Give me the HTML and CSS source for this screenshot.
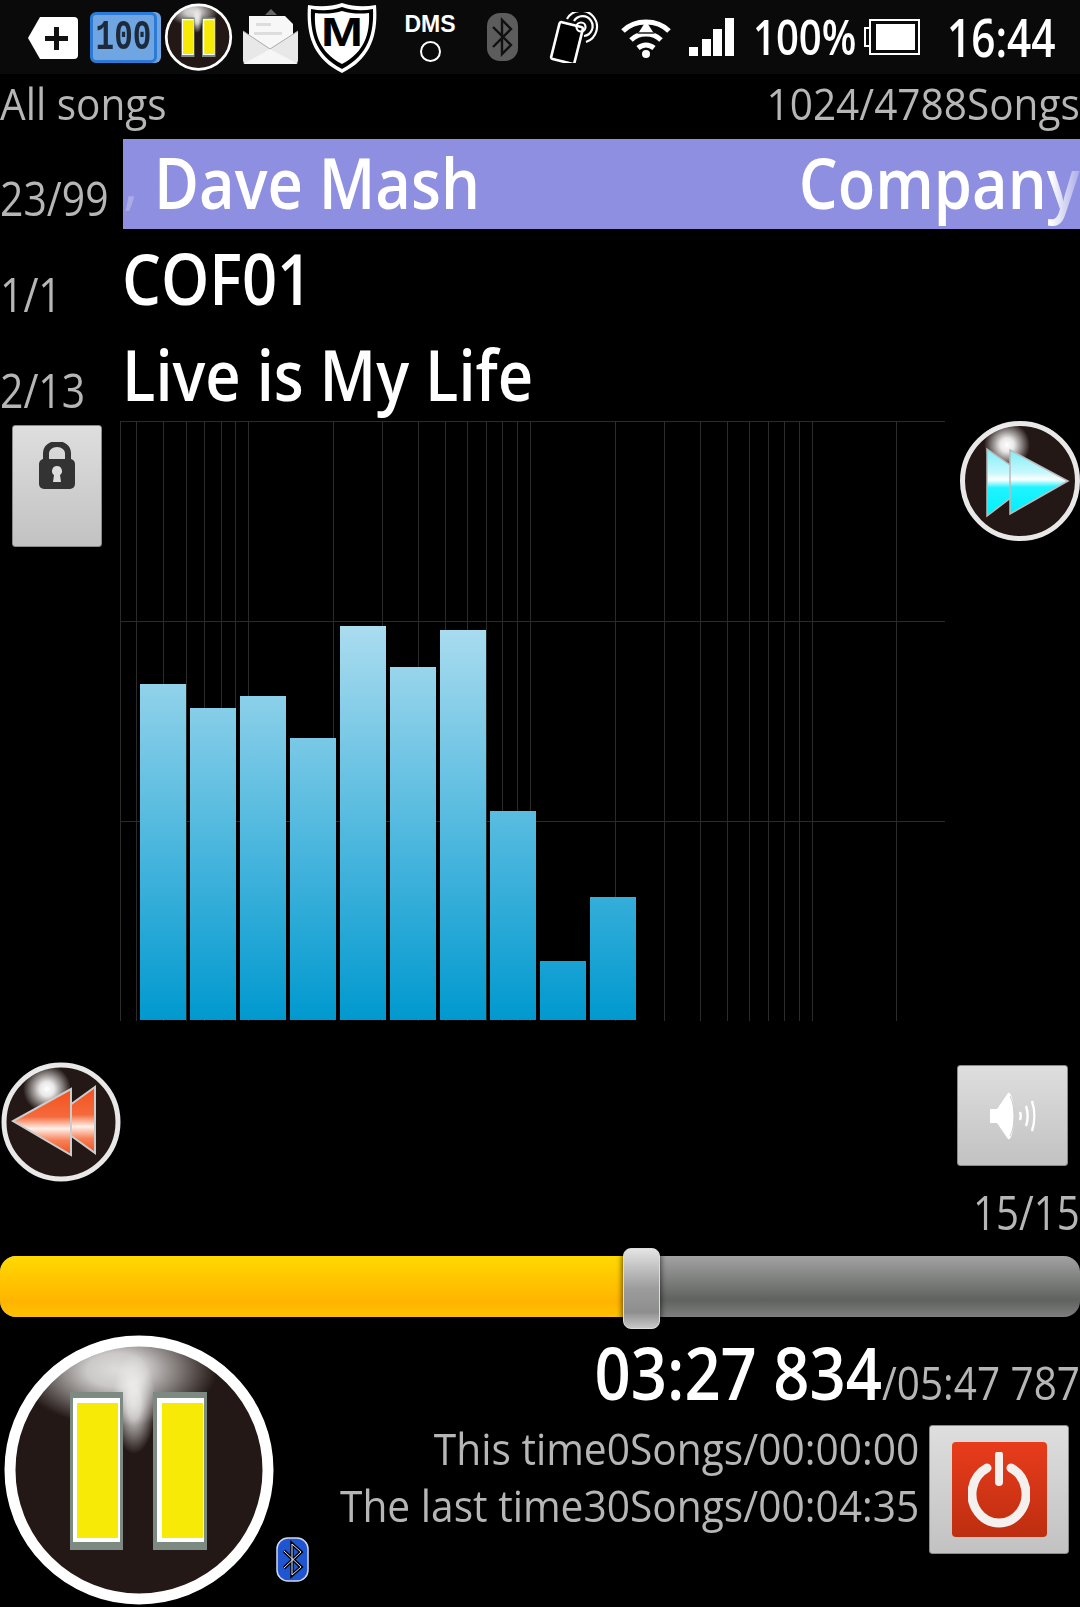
FILE: index.html
```html
<!DOCTYPE html>
<html lang="en">
<head>
<meta charset="utf-8">
<title>Player</title>
<link rel="stylesheet" href="styles.css">
</head>
<body>
<div class="screen">
  <header class="status">
    <svg class="ic-tag" viewBox="0 0 50 42"><path d="M12 0H46a4 4 0 0 1 4 4V38a4 4 0 0 1-4 4H12L0 21Z" fill="#fff"/><path d="M26 10h5v9h9v5h-9v9h-5v-9h-9v-5h9Z" fill="#111"/></svg>
    <div class="ic-batt"><span class="lcd">100</span></div>
    <svg class="ic-pause-s" viewBox="0 0 270 272"><use href="#pauseBtn"/></svg>
    <svg class="ic-mail" viewBox="0 0 55 55"><path d="M28 0 22 6h12Z" fill="#666"/><path d="M6 7h36l8 8V33L28 47 6 33Z" fill="#f7f7f7"/><path d="M13 14h15v3H13ZM11 23h28v3H11Z" fill="#ddd"/><path d="M0 22 27 40 55 22V51a4 4 0 0 1-4 4H4a4 4 0 0 1-4-4Z" fill="#e8e8e8"/><path d="M0 22 27 40 55 22" fill="none" stroke="#aaa" stroke-width="1"/><path d="M0 55 27 40 55 55Z" fill="#f6f6f6"/></svg>
    <svg class="ic-shield" viewBox="0 0 70 71"><path d="M35 1C47 5 58 5 69 3 71 30 66 56 35 71 4 56-1 30 1 3 12 5 23 5 35 1Z" fill="#fff"/><path d="M35 5C46 9 56 9 66 7 67 30 62 53 35 67 8 53 3 30 4 7 14 9 24 9 35 5Z" fill="#000"/><path d="M35 9C45 12 54 12 62 11 63 31 58 50 35 62 12 50 7 31 8 11 16 12 25 12 35 9Z" fill="#fff"/><text class="shield-m" x="14" y="44" textLength="42" lengthAdjust="spacingAndGlyphs">M</text></svg>
    <div class="dms"><span class="dms-text">DMS</span><span class="dms-dot"></span></div>
    <svg class="ic-bt" viewBox="0 0 31 48"><rect width="31" height="48" rx="13" fill="#5c5c5c"/><path d="M6 14 24 32 15 41V7l9 9L6 34" fill="none" stroke="#111" stroke-width="2.4"/></svg>
    <svg class="ic-nfc" viewBox="0 0 50 51"><rect x="6" y="12" width="24" height="38" rx="2" transform="rotate(14 18 31)" fill="#000" stroke="#fff" stroke-width="2.6"/><g fill="none" stroke="#fff" stroke-width="2.2"><path d="M18 7A16 16 0 1 1 37 30"/><path d="M25 9A10 10 0 1 1 35 24"/><circle cx="32" cy="15" r="4.5"/></g></svg>
    <svg class="ic-wifi" viewBox="0 0 50 41"><g fill="none" stroke="#fff" stroke-width="5"><path d="M2 14C14 2 36 2 48 14"/><path d="M10 23C18 15 32 15 40 23"/><path d="M17 31C22 27 28 27 33 31"/></g><circle cx="25" cy="37" r="4" fill="#fff"/><path d="M25 4 32 15H18Z" fill="#fff"/><path d="M18 15H32L34 17H16Z" fill="#555"/></svg>
    <svg class="ic-signal" viewBox="0 0 45 38"><path d="M0 29h9v9H0ZM13 21h9v17h-9ZM24 11h9v27h-9ZM36 0h9v38h-9Z" fill="#fff"/></svg>
    <span class="pct">100%</span>
    <div class="ic-power"><span class="batt-nub"></span><span class="batt-body"><span class="batt-fill"></span></span></div>
    <span class="clock">16:44</span>
  </header>

  <div class="info">
    <span class="muted">All songs</span>
    <span class="muted to-right">1024/4788Songs</span>
  </div>

  <section class="tracks">
    <div class="track">
      <span class="count">23/99</span>
      <div class="marquee">
        <span class="comma">,</span>
        <span class="title artist">Dave Mash</span>
        <span class="title company">Company</span>
      </div>
    </div>
    <div class="track">
      <span class="count">1/1</span>
      <span class="title">COF01</span>
    </div>
    <div class="track">
      <span class="count">2/13</span>
      <span class="title">Live is My Life</span>
    </div>
  </section>

  <section class="main">
    <div class="side">
      <button class="key lock" type="button">
        <svg class="lock-ic" viewBox="0 0 36 47"><path d="M7 20V11a11 9 0 0 1 22 0v9" fill="none" stroke="#333" stroke-width="6"/><rect y="17" width="36" height="30" rx="5" fill="#333"/><path d="M18 24a5 5 0 0 1 3 9l1 7h-8l1-7a5 5 0 0 1 3-9Z" fill="#ddd"/></svg>
      </button>
    </div>
    <div class="chart">
      <svg class="grid" viewBox="0 0 825 600">
        <path class="grid-lines" d="M0 .5H825M0 200.5H825M0 400.5H825M.5 0V600M16.5 0V600M43.5 0V600M66.5 0V600M84.5 0V600M101.5 0V600M115.5 0V600M128.5 0V600M213.5 0V600M262.5 0V600M298.5 0V600M325.5 0V600M347.5 0V600M366.5 0V600M382.5 0V600M397.5 0V600M410.5 0V600M495.5 0V600M544.5 0V600M580.5 0V600M607.5 0V600M629.5 0V600M648.5 0V600M664.5 0V600M679.5 0V600M692.5 0V600M776.5 0V600"/>
      </svg>
      <div class="bars">
        <div class="bar" style="height:336px"></div>
        <div class="bar" style="height:312px"></div>
        <div class="bar" style="height:324px"></div>
        <div class="bar" style="height:282px"></div>
        <div class="bar" style="height:394px"></div>
        <div class="bar" style="height:353px"></div>
        <div class="bar" style="height:390px"></div>
        <div class="bar" style="height:209px"></div>
        <div class="bar" style="height:59px"></div>
        <div class="bar" style="height:123px"></div>
      </div>
    </div>
    <svg class="round-btn" viewBox="0 0 120 120">
      <defs>
        <radialGradient id="glare"><stop offset="0" stop-color="#fff"/><stop offset=".3" stop-color="#fff" stop-opacity=".9"/><stop offset="1" stop-color="#fff" stop-opacity="0"/></radialGradient>
        <linearGradient id="cyan" x1="0" y1="0" x2="0" y2="1"><stop offset="0" stop-color="#7eeef8"/><stop offset=".36" stop-color="#c8f8fc"/><stop offset=".46" stop-color="#fff"/><stop offset=".58" stop-color="#20f4ff"/><stop offset="1" stop-color="#00f0ff"/></linearGradient>
        <linearGradient id="orange" x1="0" y1="0" x2="0" y2="1"><stop offset="0" stop-color="#f4501c"/><stop offset=".42" stop-color="#f46a3c"/><stop offset=".6" stop-color="#fff0e8"/><stop offset=".78" stop-color="#f88058"/><stop offset="1" stop-color="#f4501c"/></linearGradient>
      </defs>
      <circle cx="60" cy="60" r="57.5" fill="#231815" stroke="#e8e8e8" stroke-width="5"/>
      <circle cx="47" cy="24" r="23" fill="url(#glare)"/>
      <path d="M27 28 73 60 27 95Z" fill="url(#cyan)" stroke="#bbb" stroke-width="1.5"/>
      <path d="M50 29 108 60 50 93Z" fill="url(#cyan)" stroke="#bbb" stroke-width="1.5"/>
    </svg>
  </section>

  <section class="transport">
    <svg class="round-btn" viewBox="0 0 122 122">
      <circle cx="61" cy="61" r="57" fill="#231815" stroke="#e8e8e8" stroke-width="5"/>
      <circle cx="47" cy="28" r="24" fill="url(#glare)"/>
      <path d="M95 26V92L70 74V44Z" fill="url(#orange)" stroke="#ccc" stroke-width="2"/>
      <path d="M71 28V94L13 60Z" fill="url(#orange)" stroke="#ccc" stroke-width="2"/>
    </svg>
    <div class="vol">
      <button class="key vol-key" type="button">
        <svg class="vol-ic" viewBox="0 0 46 48"><path d="M0 17h7L18 1c3-2 6 8 6 23s-3 25-6 23L7 31H0Z" fill="#fff"/><g fill="none" stroke="#fff"><path d="M20 4c3 5 4 14 4 20s-1 15-4 20" stroke="#ccc" stroke-width="1"/><path d="M30 20c1 3 1 6 0 8" stroke-width="2.4"/><path d="M36 14c2 6 2 14 0 20" stroke-width="2.4"/><path d="M42 9c3 9 3 21 0 30" stroke-width="2.4"/></g></svg>
      </button>
      <span class="vol-level">15/15</span>
    </div>
  </section>

  <section class="seek">
    <div class="seek-track"><div class="seek-fill" style="width:625px"></div></div>
    <div class="seek-knob"></div>
  </section>

  <section class="bottom">
    <svg class="pause-big" viewBox="0 0 270 272">
      <defs>
        <clipPath id="pauseClip"><circle cx="135" cy="136" r="129"/></clipPath>
        <g id="pauseBtn">
          <circle cx="135" cy="136" r="129" fill="#231815"/>
          <g clip-path="url(#pauseClip)">
            <ellipse cx="113" cy="36" rx="100" ry="56" fill="url(#glare)" opacity=".85"/>
            <ellipse cx="130" cy="70" rx="22" ry="50" fill="url(#glare)" opacity=".8"/>
          </g>
          <circle cx="135" cy="136" r="129" fill="none" stroke="#fff" stroke-width="11"/>
          <rect x="66" y="58" width="53" height="158" fill="#7c8a82"/>
          <rect x="149" y="58" width="54" height="158" fill="#7c8a82"/>
          <rect x="69" y="64" width="47" height="144" fill="#fff"/>
          <rect x="153" y="64" width="47" height="144" fill="#fff"/>
          <rect x="73" y="69" width="41" height="135" fill="#f7ea06"/>
          <rect x="158" y="69" width="41" height="135" fill="#f7ea06"/>
        </g>
      </defs>
      <use href="#pauseBtn"/>
    </svg>
    <svg class="bt-badge" viewBox="0 0 33 45"><rect x="1" y="1" width="31" height="43" rx="11" fill="#1f55d0" stroke="#cfd8ee" stroke-width="1.5"/><path d="M8 14 25 30 16 38V7l9 8L8 31" fill="none" stroke="#000" stroke-width="3.5"/><path d="M8 14 25 30 16 38V7l9 8L8 31" fill="none" stroke="#dfe8ff" stroke-width="1"/></svg>
    <div class="readout">
      <div class="time"><span class="elapsed">03:27 834</span><span class="total">/05:47 787</span></div>
      <div class="stats">
        <div class="stat-lines">
          <div class="muted to-right stat">This time0Songs/00:00:00</div>
          <div class="muted to-right stat">The last time30Songs/00:04:35</div>
        </div>
        <button class="key power" type="button">
          <span class="power-face">
            <svg class="power-ic" viewBox="0 0 62 76"><path d="M19 16a27 29 0 1 0 24 0" fill="none" stroke="#f4f0ee" stroke-width="9" stroke-linecap="round"/><path d="M31 3V30" stroke="#f4f0ee" stroke-width="8" stroke-linecap="round"/></svg>
          </span>
        </button>
      </div>
    </div>
  </section>
</div>
</body>
</html>
```

FILE: styles.css
```css
* { box-sizing: border-box; }
html, body { margin: 0; padding: 0; background: #000; }
.screen {
  width: 1080px;
  height: 1607px;
  overflow: hidden;
  background: #000;
  font-family: "Open Sans", "Noto Sans", sans-serif;
  color: #fff;
}
svg { display: block; flex: none; }

.status { display: flex; align-items: center; height: 74px; background: #0a0a0a; }
.ic-tag { width: 50px; height: 42px; margin-left: 28px; margin-top: 2px; }
.ic-batt {
  flex: none; width: 67px; height: 51px; margin-left: 12px; margin-top: 1px;
  display: flex; align-items: center; justify-content: center;
  background: #6fa6e2; border: 3px solid #2b7ad6; border-radius: 6px;
  box-shadow: 4px 0 0 0 #6fa6e2;
}
.lcd { display: block; font: 700 31px/1 "Liberation Mono", monospace; color: #1c2a3c; transform: scaleY(1.35); }
.ic-pause-s { width: 69px; height: 68px; margin-left: 7px; }
.ic-mail { width: 55px; height: 55px; margin-left: 10px; margin-top: -1px; }
.ic-shield { width: 70px; height: 71px; margin-left: 9px; margin-top: 1px; }
.shield-m { font: 700 40px "Liberation Sans", sans-serif; fill: #000; }
.dms { flex: none; width: 48px; margin-left: 29px; display: flex; flex-direction: column; align-items: center; margin-top: 1px; }
.dms-text { font: 700 23px/22px "Liberation Sans", sans-serif; }
.dms-dot { width: 21px; height: 21px; margin-top: 6px; border: 2px solid #fff; border-radius: 50%; }
.ic-bt { width: 31px; height: 48px; margin-left: 33px; }
.ic-nfc { width: 50px; height: 51px; margin-left: 31px; }
.ic-wifi { width: 50px; height: 41px; margin-left: 22px; margin-top: 1px; }
.ic-signal { width: 45px; height: 38px; margin-left: 18px; }
.pct { flex: none; width: 100px; margin-left: 19px; font-size: 48px; line-height: 74px; font-weight: 600; white-space: nowrap; transform: scaleX(.835); transform-origin: left; }
.ic-power { flex: none; display: flex; align-items: center; margin-left: 11px; }
.batt-nub { width: 5px; height: 20px; border: 2px solid #fff; border-right: 0; }
.batt-body { width: 51px; height: 36px; border: 2px solid #fff; padding: 3px 3px 3px 5px; display: block; }
.batt-fill { display: block; height: 100%; background: #fff; }
.clock { flex: none; width: 112px; margin-left: 27px; font-size: 53px; line-height: 74px; font-weight: 600; white-space: nowrap; transform: scaleX(.8); transform-origin: left; }

.info { display: flex; justify-content: space-between; height: 65px; }
.muted { color: #b6b6b6; font-size: 44px; line-height: 58px; font-weight: 500; white-space: nowrap; transform: scaleX(.922); transform-origin: left; }
.to-right { transform-origin: right; }

.tracks { display: flex; flex-direction: column; gap: 6px; height: 282px; }
.track { display: grid; grid-template-columns: 123px 1fr; height: 90px; }
.count { color: #b6b6b6; font-size: 47px; line-height: 44px; padding-top: 37px; font-weight: 500; white-space: nowrap; transform: scaleX(.87); transform-origin: left; }
.title { font-size: 71px; line-height: 85px; white-space: nowrap; font-weight: 600; transform: scaleX(.865); transform-origin: left; }
.track > .title { margin-left: -1px; }
.marquee { position: relative; display: flex; background: #8e8fe0; }
.marquee::after { content: ""; position: absolute; top: 0; bottom: 0; right: 0; width: 30px; background: linear-gradient(to left, rgba(142,143,224,.75), rgba(142,143,224,0)); }
.comma { font-size: 60px; line-height: 82px; width: 31px; flex: none; opacity: .25; }
.artist { flex: 1; }
.company { transform-origin: right; }

.main { display: grid; grid-template-columns: 120px 825px 15px 120px; height: 600px; }
.side { padding: 4px 0 0 12px; }
.key {
  display: flex; align-items: center; justify-content: center; flex: none;
  padding: 0; border: 1px solid #8a8a8a; border-radius: 3px;
  background: linear-gradient(#dedede, #c2c2c2);
}
.lock { width: 90px; height: 122px; align-items: flex-start; padding-top: 16px; }
.lock-ic { width: 36px; height: 47px; }
.chart { position: relative; }
.grid { position: absolute; inset: 0; width: 825px; height: 600px; }
.grid-lines { stroke: #2b2b2b; stroke-width: 1; fill: none; }
.bars { position: relative; display: flex; align-items: flex-end; gap: 4px; height: 599px; padding-left: 20px; }
.bar {
  flex: none; width: 46px;
  background: linear-gradient(#aadcef, #0099cf) left bottom / 100% 394px no-repeat;
}
.round-btn { width: 120px; height: 120px; grid-column: 4; filter: blur(.5px); }

.transport { display: flex; justify-content: space-between; height: 227px; padding-top: 40px; }
.transport .round-btn { width: 122px; height: 122px; }
.vol { display: flex; flex-direction: column; align-items: flex-end; }
.vol-key { width: 111px; height: 101px; margin: 4px 12px 0 0; }
.vol-ic { width: 46px; height: 48px; }
.vol-level { margin-top: 17px; color: #b6b6b6; font-size: 47px; line-height: 58px; font-weight: 500; white-space: nowrap; transform: scaleX(.855); transform-origin: right; }

.seek { position: relative; height: 81px; padding-top: 8px; }
.seek-track {
  height: 61px; border-radius: 16px; overflow: hidden;
  background: linear-gradient(#a2a2a2, #5f625f 72%, #7e7e7e);
}
.seek-fill { height: 100%; background: linear-gradient(#ffd900, #ffb400 75%, #ffc200); box-shadow: 12px 0 14px rgba(0,0,0,.55); }
.seek-knob {
  position: absolute; left: 623px; top: 0; width: 37px; height: 81px;
  border-radius: 8px; border: 1px solid #ddd;
  background: linear-gradient(#e4e4e4, #9c9c9c 50%, #8e8e8e 80%, #c8c8c8);
  box-shadow: 0 0 6px rgba(0,0,0,.8);
}

.bottom { display: flex; height: 278px; }
.pause-big { width: 270px; height: 272px; margin: 5px 0 0 4px; filter: blur(.6px); }
.bt-badge { width: 33px; height: 45px; margin: 208px 0 0 2px; }
.readout { flex: 1; min-width: 0; padding-top: 2px; }
.time { display: flex; justify-content: flex-end; align-items: baseline; height: 82px; white-space: nowrap; transform: scaleX(.88); transform-origin: right; }
.elapsed { font-size: 72px; line-height: 82px; font-weight: 600; }
.total { font-size: 46px; line-height: 82px; font-weight: 500; color: #b6b6b6; }
.stats { display: flex; justify-content: flex-end; gap: 10px; margin-top: 7px; padding-right: 11px; }
.stat-lines { text-align: right; }
.stat { line-height: 57px; transform: scaleX(.925); }
.power { width: 140px; height: 129px; margin-top: 5px; }
.power-face {
  display: flex; align-items: center; justify-content: center;
  width: 95px; height: 95px; border-radius: 4px;
  background: linear-gradient(#e83c1c, #bd2e10);
}
.power-ic { width: 62px; height: 76px; }
```
